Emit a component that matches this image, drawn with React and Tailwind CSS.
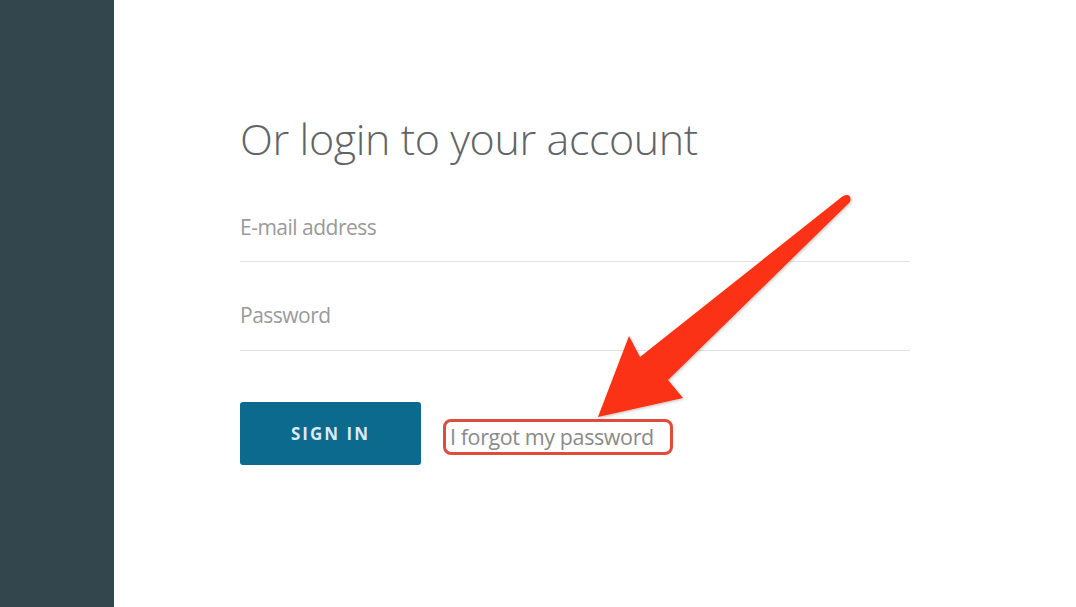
export default function App() {
  return (
    <div className="relative flex h-[607px] w-[1076px] overflow-hidden bg-white" style={{ fontFamily: "'Open Sans', sans-serif" }}>
      <aside className="h-full w-[114px] shrink-0 bg-[#33454d]" />

      <main className="flex-1 pl-[126px] pt-[111px]">
        <div className="w-[670px]">
          <h1 className="text-[43px] font-light leading-[56px] tracking-[-0.4px] text-[#5f6468]">
            Or login to your account
          </h1>

          <div className="mt-[47px] border-b border-[#e3e3e3] pb-[21px]">
            <span className="block text-[21px] leading-[26px] tracking-[-0.5px] text-[#9a9a9a]">
              E-mail address
            </span>
          </div>

          <div className="mt-[40px] border-b border-[#e3e3e3] pb-[22px]">
            <span className="block text-[21px] leading-[26px] tracking-[-0.5px] text-[#9a9a9a]">
              Password
            </span>
          </div>

          <div className="mt-[51px] flex items-center">
            <button className="flex h-[63px] w-[181px] items-center justify-center rounded-[3px] bg-[#0c6a8f] text-[17px] font-bold tracking-[2px] text-[#dbeaf1]">
              SIGN IN
            </button>
            <div className="ml-[22px] mt-[6px] flex h-[36px] w-[230px] items-center rounded-[8px] border-[3px] border-[#e04b3b] pl-[4px]">
              <span className="text-[21.5px] leading-[28px] tracking-[-0.4px] text-[#8a8a8a]">
                I forgot my password
              </span>
            </div>
          </div>
        </div>
      </main>

      <svg className="pointer-events-none absolute left-0 top-0" width="1076" height="607" viewBox="0 0 1076 607">
        <defs>
          <filter id="arrowShadow" x="-10%" y="-10%" width="120%" height="120%">
            <feDropShadow dx="1" dy="1" stdDeviation="1.5" floodColor="#000" floodOpacity="0.25" />
          </filter>
        </defs>
        <g filter="url(#arrowShadow)" fill="#fb3112">
          <polygon points="843,196 850,202 668,380 683,398 598,417 629,336 640,357" />
          <circle cx="846.5" cy="199" r="4" />
        </g>
      </svg>
    </div>
  );
}
